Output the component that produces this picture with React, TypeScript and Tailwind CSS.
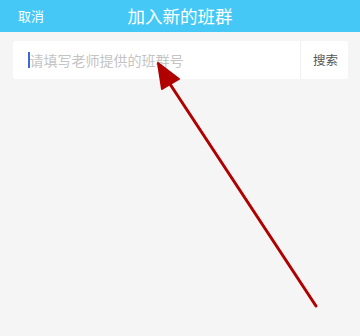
export default function App() {
  return (
    <div
      className="relative h-[336px] w-[360px] overflow-hidden bg-[#f5f5f5]"
      style={{ fontFamily: '"Noto Sans CJK SC", "Noto Sans", sans-serif' }}
    >
      <div className="flex h-[32px] items-center bg-[#45c8f6] px-[18px]">
        <span className="w-[60px] text-[13px] text-white">取消</span>
        <span className="flex-1 text-center text-[17.5px] leading-none text-white">加入新的班群</span>
        <span className="w-[60px]" />
      </div>
      <div className="pl-[13px] pr-[12px] pt-[9px]">
        <div className="flex h-[38px] items-center rounded-[3px] bg-white">
          <div className="flex flex-1 items-center pl-[15px]">
            <span className="h-[16px] w-[1.5px] bg-[#3b6ad8]" />
            <span className="text-[14px] text-[#c4c4c4]">请填写老师提供的班群号</span>
          </div>
          <div className="h-full w-px bg-[#f0f0f0]" />
          <span className="pl-[12px] pr-[10px] text-[12.5px] text-[#555]">搜索</span>
        </div>
      </div>
      <svg className="absolute left-0 top-0" width="360" height="336" viewBox="0 0 360 336">
        <line x1="316" y1="306" x2="166" y2="78" stroke="#b00000" strokeWidth="3" strokeLinecap="round" />
        <polygon points="158,63 179,79 162,89" fill="#b00000" stroke="#b00000" strokeWidth="2" strokeLinejoin="round" />
      </svg>
    </div>
  );
}
